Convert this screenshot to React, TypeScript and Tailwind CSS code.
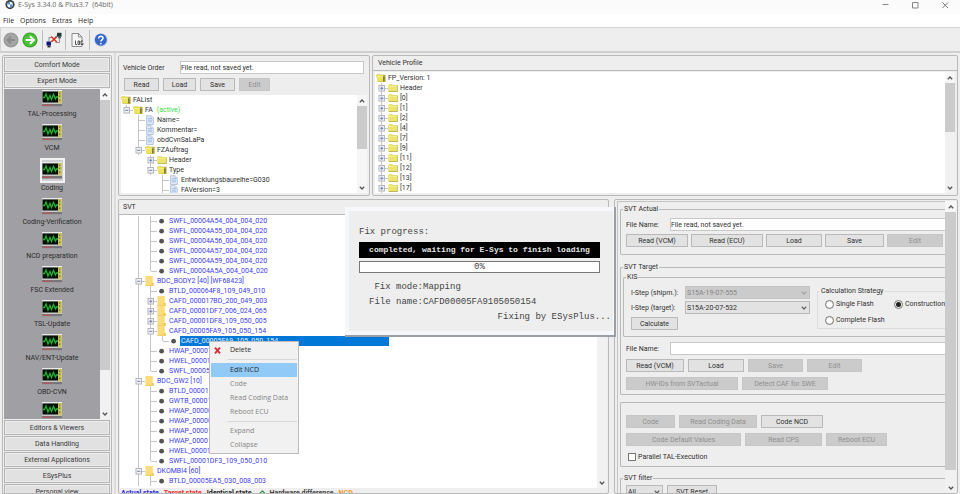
import React from "react";

const ui = "font-['Roboto','Liberation_Sans',sans-serif]";
const menuFont = "font-['Open_Sans','Noto_Sans',sans-serif]";

/* ---------- small controls ---------- */

function Btn({ children, className = "", disabled = false }: { children: React.ReactNode; className?: string; disabled?: boolean }) {
  return (
    <button
      type="button"
      disabled={disabled}
      className={`h-[13px] shrink-0 border text-center leading-[10px] ${
        disabled ? "border-[#c6c6c6] bg-[#cbcbcb] text-[#8f8f8f]" : "border-[#b9b9b9] bg-[#e2e2e2] text-[#303030]"
      } ${className}`}
    >
      {children}
    </button>
  );
}

function Chevron({ up = false, color = "#555" }: { up?: boolean; color?: string }) {
  return (
    <svg viewBox="0 0 6 6" className="h-[6px] w-[6px]" fill="none" stroke={color} strokeWidth="1.3">
      <path d={up ? "M0.8 4.2 3 2 5.2 4.2" : "M0.8 1.8 3 4 5.2 1.8"} />
    </svg>
  );
}

function ScrollBar({ thumb, track, className = "" }: { thumb: string; track: string; className?: string }) {
  return (
    <div className={`flex shrink-0 flex-col ${track} ${className}`}>
      <div className="flex h-[11px] shrink-0 items-center justify-center bg-[#f6f6f6]">
        <Chevron up />
      </div>
      <div className={`shrink-0 bg-[#cbcbcb] ${thumb}`} />
      <div className="flex-1" />
      <div className="flex h-[11px] shrink-0 items-center justify-center">
        <Chevron />
      </div>
    </div>
  );
}

function Group({ title, children, className = "", body = "" }: { title: string; children: React.ReactNode; className?: string; body?: string }) {
  return (
    <fieldset className={`min-w-0 rounded-l-[2px] border border-r-0 border-[#b9b9b9] ${className}`}>
      <legend className="ml-[2px] px-px leading-[10px]">{title}</legend>
      <div className={body}>{children}</div>
    </fieldset>
  );
}

function Combo({ id, label, value, disabled = false, className = "" }: { id: string; label?: string; value: string; disabled?: boolean; className?: string }) {
  return (
    <div className={`relative ${className}`}>
      <select
        id={id}
        aria-label={label}
        disabled={disabled}
        className={`block h-[13px] w-full appearance-none border px-px leading-[10px] opacity-100 ${
          disabled ? "border-[#c4c4c4] bg-[#cbcbcb] text-[#858585]" : "border-[#b9b9b9] bg-[#e2e2e2] text-[#303030]"
        }`}
      >
        <option>{value}</option>
      </select>
      <span className="pointer-events-none absolute top-[4px] right-[3px]">
        <Chevron color={disabled ? "#a5a5a5" : "#666"} />
      </span>
    </div>
  );
}

/* ---------- tree ---------- */

type Icon = "open" | "closed" | "doc" | "dot" | "yellow";
type Row = { g: string; icon: Icon; text: string; extra?: string; selected?: boolean };

/* One 12x10 cell of guide lines: "|" passes through, "t" tee, "l" corner, "+", "-" and "_" are handles. */
function Guide({ kind }: { kind: string }) {
  const handle = kind === "+" || kind === "-" || kind === "_";
  return (
    <svg viewBox="0 0 12 10" className="h-[10px] w-[12px] shrink-0" fill="none" stroke="#c6c6c6" strokeWidth="1">
      {kind !== " " && <path d={kind === "l" || kind === "_" ? "M5.5 0V5" : "M5.5 0V10"} />}
      {kind !== " " && kind !== "|" && <path d="M6 5.5H12" />}
      {handle && (
        <>
          <rect x="3" y="2.5" width="5.5" height="5.5" fill="#f4f4f8" stroke="#b4b4ba" />
          <path d="M4.2 5.3H7.4" stroke="#6f7fb8" />
          {kind === "+" && <path d="M5.8 3.7V6.9" stroke="#6f7fb8" />}
        </>
      )}
    </svg>
  );
}

function TreeIcon({ icon }: { icon: Icon }) {
  return (
    <svg viewBox="0 0 10 10" className="h-[10px] w-[10px] shrink-0">
      {icon === "open" && (
        <>
          <path d="M0.2 2 3.2 0.8 4.2 1.8H9.6V9H2Z" fill="#b5ac4a" />
          <path d="M0.2 2 3.3 0.8 4.3 2.2 7.2 2.3V8.5L1.6 8.7Z" fill="#ece35c" />
          <path d="M1 3.6H6.6" stroke="#f8f4a4" strokeWidth="0.7" />
          <path d="M7.3 3.4H8.4V8.2H7.3Z" fill="#6a6530" />
        </>
      )}
      {icon === "closed" && (
        <>
          <path d="M0.8 2.2 1.6 1.2H4L4.8 2.2H9.7V9H0.8Z" fill="#b0a850" />
          <path d="M0.3 2 1.2 1.1H3.8L4.6 2.2H9V8.3H0.3Z" fill="#ece56c" />
          <path d="M0.8 3.3H8.6" stroke="#f8f4a4" strokeWidth="0.7" />
        </>
      )}
      {icon === "doc" && (
        <>
          <path d="M1.6 0.7H6L8.3 2.8V9.5H1.6Z" fill="#dfeafa" stroke="#9fb1cd" strokeWidth="0.7" />
          <path d="M2.8 3.6H7M2.8 5.2H7M2.8 6.8H7" stroke="#94b0dd" strokeWidth="0.7" />
          <path d="M6 0.8V2.8H8.2" stroke="#9fb1cd" strokeWidth="0.6" fill="#fff" />
        </>
      )}
      {icon === "dot" && <circle cx="4.6" cy="5.2" r="2.4" fill="#555" />}
      {icon === "yellow" && (
        <>
          <path d="M0.4 0.1H7.8V9.9H0.4Z" fill="#fbdc7c" />
          <path d="M6.6 7H8.8V9.9H6.6Z" fill="#f3c955" />
          <path d="M0.4 9.4H7" stroke="#efcb62" strokeWidth="0.8" />
        </>
      )}
    </svg>
  );
}

function Tree({ rows, color = "text-[#303030]" }: { rows: Row[]; color?: string }) {
  return (
    <ul className={color}>
      {rows.map((r, i) => (
        <li key={i} className="flex h-[10px] items-center leading-[10px] whitespace-pre">
          {r.g.split("").map((k, j) => (
            <Guide key={j} kind={k} />
          ))}
          <TreeIcon icon={r.icon} />
          <span className={r.selected ? "ml-px w-[209px] bg-[#0078d7] pl-px text-[#e4efff]" : "pl-[2px]"}>{r.text}</span>
          {r.extra && <span className="pl-[4px] text-[#3be23b]">{r.extra}</span>}
        </li>
      ))}
    </ul>
  );
}

const orderRows: Row[] = [
  { g: "", icon: "open", text: "FAList" },
  { g: "_", icon: "open", text: "FA", extra: "(active)" },
  { g: " t", icon: "doc", text: "Name=" },
  { g: " t", icon: "doc", text: "Kommentar=" },
  { g: " t", icon: "doc", text: "obdCvnSaLaPa" },
  { g: " -", icon: "open", text: "FZAuftrag" },
  { g: "  +", icon: "closed", text: "Header" },
  { g: "  -", icon: "open", text: "Type" },
  { g: "   t", icon: "doc", text: "Entwicklungsbaureihe=G030" },
  { g: "   t", icon: "doc", text: "FAVersion=3" },
];

const profileRows: Row[] = [
  { g: "", icon: "open", text: "FP_Version: 1" },
  ...["Header", "[0]", "[1]", "[2]", "[4]", "[7]", "[9]", "[11]", "[12]", "[13]", "[17]"].map(
    (text): Row => ({ g: "+", icon: "closed", text })
  ),
];

const svtRows: Row[] = [
  { g: " |t", icon: "dot", text: "SWFL_00004A54_004_004_020" },
  { g: " |t", icon: "dot", text: "SWFL_00004A55_004_004_020" },
  { g: " |t", icon: "dot", text: "SWFL_00004A56_004_004_020" },
  { g: " |t", icon: "dot", text: "SWFL_00004A57_004_004_020" },
  { g: " |t", icon: "dot", text: "SWFL_00004A59_004_004_020" },
  { g: " |l", icon: "dot", text: "SWFL_00004A5A_004_004_020" },
  { g: " -", icon: "yellow", text: "BDC_BODY2 [40] [WF68423]" },
  { g: " |t", icon: "dot", text: "BTLD_000064F8_109_049_010" },
  { g: " |+", icon: "yellow", text: "CAFD_000017BD_200_049_003" },
  { g: " |+", icon: "yellow", text: "CAFD_00001DF7_006_024_065" },
  { g: " |+", icon: "yellow", text: "CAFD_00001DF8_109_050_005" },
  { g: " |-", icon: "yellow", text: "CAFD_00005FA9_105_050_154" },
  { g: " ||l", icon: "dot", text: "CAFD_00005FA9_105_050_154", selected: true },
  { g: " |t", icon: "dot", text: "HWAP_00001" },
  { g: " |t", icon: "dot", text: "HWEL_00001" },
  { g: " |l", icon: "dot", text: "SWFL_00005" },
  { g: " -", icon: "yellow", text: "BDC_GW2 [10]" },
  { g: " |t", icon: "dot", text: "BTLD_00001" },
  { g: " |t", icon: "dot", text: "GWTB_00001" },
  { g: " |t", icon: "dot", text: "HWAP_00000" },
  { g: " |t", icon: "dot", text: "HWAP_00000" },
  { g: " |t", icon: "dot", text: "HWAP_00001" },
  { g: " |t", icon: "dot", text: "HWAP_00001" },
  { g: " |t", icon: "dot", text: "HWEL_00001DF0_002_001_000" },
  { g: " |l", icon: "dot", text: "SWFL_00001DF3_109_050_010" },
  { g: " -", icon: "yellow", text: "DKOMBI4 [60]" },
  { g: " |t", icon: "dot", text: "BTLD_00005EA5_030_008_003" },
];

/* ---------- sidebar ---------- */

function ScopeIcon() {
  return (
    <svg viewBox="0 0 20 17" className="h-[17px] w-[20px]">
      <rect width="20" height="17" fill="#c9c9c9" />
      <rect y="0" width="20" height="1" fill="#e9e9e9" />
      <rect x="0.5" y="1.5" width="15.5" height="11" fill="#051005" />
      <path d="M1 7.5H2.5L4 4 6 10 8 5.5 9.5 9.5 11.5 4.5 13.5 9 14.5 7H16" stroke="#1fb431" strokeWidth="1.3" fill="none" />
      <rect x="16" y="1" width="3.5" height="12.5" fill="#c9c158" />
      <path d="M17.7 2.5V4M17.7 5.5V7M17.7 9.5V11" stroke="#7a7530" strokeWidth="1.2" />
      <rect x="0" y="14" width="20" height="2.6" fill="#77777b" />
      <path d="M1 15.2H10" stroke="#d84848" strokeWidth="1" strokeDasharray="2.4 0.6" />
    </svg>
  );
}

const modules = ["TAL-Processing", "VCM", "Coding", "Coding-Verification", "NCD preparation", "FSC Extended", "TSL-Update", "NAV/ENT-Update", "OBD-CVN"];

function SideButton({ children }: { children: React.ReactNode }) {
  return (
    <button type="button" className="h-[15px] w-full shrink-0 border border-[#b5b5b5] bg-[#e1e1e1] leading-[12px] text-[#3a3a3a] outline outline-1 -outline-offset-2 outline-[#ececec]">
      {children}
    </button>
  );
}

function Sidebar() {
  return (
    <nav className="mt-[2px] ml-[2px] flex w-[110px] shrink-0 flex-col gap-px overflow-hidden rounded-t-[2px] border border-[#b9b9b9] bg-[#eee] p-px">
      <SideButton>Comfort Mode</SideButton>
      <SideButton>Expert Mode</SideButton>
      <div className="flex shrink-0 bg-[#a0a0a4]">
        <div className="flex flex-1 flex-col items-center pt-px">
          {modules.map((m) =>
            m === "Coding" ? (
              <button key={m} type="button" className="flex flex-col items-center pb-[5px]">
                <span className="flex h-[25px] w-[25px] items-center justify-center border-2 border-[#f2f2f2] bg-[#d0d0d4]">
                  <ScopeIcon />
                </span>
                <span className="leading-[10px] text-[#2a2a2a]">{m}</span>
              </button>
            ) : (
              <button key={m} type="button" className="flex flex-col items-center pb-[3px]">
                <ScopeIcon />
                <span className="leading-[14px] text-[#2a2a2a]">{m}</span>
              </button>
            )
          )}
          <ScopeIcon />
        </div>
        <ScrollBar className="w-[10px]" track="bg-[#f1f1f1]" thumb="h-[270px]" />
      </div>
      <SideButton>Editors &amp; Viewers</SideButton>
      <SideButton>Data Handling</SideButton>
      <SideButton>External Applications</SideButton>
      <SideButton>ESysPlus</SideButton>
      <SideButton>Personal view</SideButton>
    </nav>
  );
}

/* ---------- header ---------- */

function TitleBar() {
  return (
    <header className={`flex h-[14px] shrink-0 items-start bg-[#fbfbfb] pr-[11px] pl-[5px] ${menuFont}`}>
      <svg viewBox="0 0 10 10" className="h-[10px] w-[10px]">
        <circle cx="5" cy="4.6" r="4.6" fill="#3a3d42" />
        <circle cx="5" cy="4.6" r="2.9" fill="#fff" />
        <path d="M5 4.6V1.7A2.9 2.9 0 0 0 2.1 4.6ZM5 4.6V7.5A2.9 2.9 0 0 0 7.9 4.6Z" fill="#4a93cc" />
      </svg>
      <h1 className="flex-1 pl-[3px] leading-[10px] whitespace-pre text-[#6a6a6a]">E-Sys 3.34.0 &amp; Plus3.7  (64bit)</h1>
      <div className="flex gap-[23px] pt-[2px]">
        <button type="button" aria-label="Minimize">
          <svg viewBox="0 0 7 7" className="h-[7px] w-[7px]" stroke="#888" fill="none"><path d="M0.5 2.5H6.5" /></svg>
        </button>
        <button type="button" aria-label="Maximize">
          <svg viewBox="0 0 7 7" className="h-[7px] w-[7px]" stroke="#888" fill="none"><path d="M0.5 0.5H6V6H0.5Z" /></svg>
        </button>
        <button type="button" aria-label="Close">
          <svg viewBox="0 0 7 7" className="h-[7px] w-[7px]" stroke="#777" fill="none"><path d="M0.5 0.5 6 6M6 0.5 0.5 6" /></svg>
        </button>
      </div>
    </header>
  );
}

function MenuBar() {
  return (
    <nav className={`flex h-[13px] shrink-0 items-center gap-[6px] bg-white pl-[3px] text-[#2a2a2a] ${menuFont}`}>
      {["File", "Options", "Extras", "Help"].map((m) => (
        <button key={m} type="button" className="leading-[12px]">{m}</button>
      ))}
    </nav>
  );
}

function Toolbar() {
  const sep = <div className="h-[20px] w-px bg-[#bdbdbd]" />;
  return (
    <div className="flex h-[24px] shrink-0 items-center border-t border-l border-[#d4d4d4] bg-[#eee] pl-[2px]">
      <button type="button" aria-label="Back">
        <svg viewBox="0 0 16 16" className="h-[16px] w-[16px]">
          <circle cx="8" cy="8" r="7.5" fill="#9b9b9b" />
          <circle cx="8" cy="8" r="6" fill="#a6a6a6" />
          <path d="M12 8H5M8 4.5 4.5 8 8 11.5" stroke="#8b8b8b" strokeWidth="1.8" fill="none" />
        </svg>
      </button>
      <button type="button" aria-label="Forward" className="mr-[4px] ml-[3px]">
        <svg viewBox="0 0 16 16" className="h-[16px] w-[16px]">
          <circle cx="8" cy="8" r="7.6" fill="#3aa22c" />
          <circle cx="8" cy="8" r="6.4" fill="#4cc038" />
          <path d="M3.6 8H11.6M8 4.2 11.8 8 8 11.8" stroke="#fff" strokeWidth="2.1" fill="none" />
        </svg>
      </button>
      {sep}
      <button type="button" aria-label="Connect" className="mx-[3px]">
        <svg viewBox="0 0 16 16" className="h-[16px] w-[16px]">
          <path d="M11 0.8H15.5V4.8H11Z" fill="#1c3b3b" />
          <path d="M12 4.8H15V6.4H12Z" fill="#3f6e6e" />
          <path d="M0.5 9.5H5V13.5H0.5Z" fill="#12128a" />
          <path d="M1.5 13.5H4.5V15.4H1.5Z" fill="#26262e" />
          <path d="M3 9.5V5.5H7M13.5 6V10.5H9.5" stroke="#777" fill="none" strokeWidth="0.8" />
          <path d="M4 11 11 3.4" stroke="#444" strokeWidth="0.9" />
          <path d="M5.2 4.6 10.8 10M10.8 4.8 5.4 10" stroke="#e0311f" strokeWidth="1.4" />
        </svg>
      </button>
      {sep}
      <button type="button" aria-label="Log" className="mr-[5px] ml-[5px]">
        <svg viewBox="0 0 13 16" className="h-[16px] w-[13px]">
          <path d="M1 1.5H7.5L11 5V14.5H1Z" fill="#f6f6f6" stroke="#8d8d8d" />
          <path d="M7.5 1.5V5H11" fill="none" stroke="#8d8d8d" />
          <path d="M4.5 8.5V12.5H6M7 9H8.5V12.5H7ZM12 9H10V12.5H12V11" stroke="#444" strokeWidth="0.9" fill="none" />
        </svg>
      </button>
      {sep}
      <button type="button" aria-label="Help" className="ml-[4px]">
        <svg viewBox="0 0 14 14" className="h-[14px] w-[14px]">
          <circle cx="7" cy="7" r="6.8" fill="#c9d2e6" />
          <circle cx="6.8" cy="6.8" r="6" fill="#3568c6" />
          <path d="M4.6 5.4C4.6 2.6 9.2 2.7 9.1 5.3 9 6.9 6.9 6.8 6.9 8.5" stroke="#fff" strokeWidth="1.5" fill="none" />
          <circle cx="6.9" cy="10.6" r="0.9" fill="#fff" />
        </svg>
      </button>
    </div>
  );
}

/* ---------- panels ---------- */

const panel = "rounded-[2px] border border-[#b9b9b9] bg-[#eee]";
const field = "h-[13px] border border-[#c8c8c8] bg-white leading-[10px] text-[#303030]";

function VehicleOrder() {
  return (
    <section className={`flex w-[252px] shrink-0 flex-col pt-[5px] pb-[2px] ${panel}`}>
      <div className="flex items-center pr-[5px] pl-[4px]">
        <label htmlFor="order" className="w-[57px] shrink-0 leading-[10px]">Vehicle Order</label>
        <input id="order" readOnly defaultValue="File read, not saved yet." className={`min-w-0 flex-1 ${field}`} />
      </div>
      <div className="mt-[4px] flex gap-[4px] pl-[5px]">
        <Btn className="w-[35px]">Read</Btn>
        <Btn className="w-[33px]">Load</Btn>
        <Btn className="w-[35px]">Save</Btn>
        <Btn className="w-[31px]" disabled>Edit</Btn>
      </div>
      <div className="mt-[4px] mr-[2px] ml-[2px] flex h-[98px] overflow-hidden bg-white">
        <div className="flex-1"><Tree rows={orderRows} /></div>
        <ScrollBar className="w-[10px]" track="bg-[#f6f6f6]" thumb="h-[43px]" />
      </div>
    </section>
  );
}

function VehicleProfile() {
  return (
    <section className={`flex min-w-0 flex-1 flex-col pb-[2px] ${panel}`}>
      <h2 className="h-[15px] border-b border-[#b9b9b9] pl-[5px] leading-[14px]">Vehicle Profile</h2>
      <div className="mx-[2px] mt-px flex h-[121px] overflow-hidden bg-white">
        <div className="flex-1 pt-px pl-px"><Tree rows={profileRows} /></div>
        <ScrollBar className="w-[10px]" track="bg-[#f1f1f1]" thumb="h-[49px]" />
      </div>
    </section>
  );
}

function SvtPanel() {
  return (
    <section className={`min-w-0 flex-1 overflow-hidden ${panel}`}>
      <h2 className="h-[15px] border-b border-[#b9b9b9] pl-[4px] leading-[14px]">SVT</h2>
      <div className="mr-px ml-px flex bg-white">
        <div className="flex-1 pt-px pb-[2px] pl-px"><Tree rows={svtRows} color="text-[#3c3cf0]" /></div>
        <ScrollBar className="w-[10px]" track="bg-[#f1f1f1]" thumb="h-[100px]" />
      </div>
      <div className="flex gap-[5px] pl-[2px] leading-[10px] font-bold">
        <span className="text-[#2a2ae0]">Actual state</span>
        <span className="text-[#ee3030]">Target state</span>
        <span className="text-[#222]">Identical state</span>
        <span className="flex items-center gap-[3px] pl-[3px] text-[#444]">
          <svg viewBox="0 0 7 7" className="h-[7px] w-[7px]" fill="none" stroke="#2a8a3a" strokeWidth="1.1">
            <path d="M1 5V3L3.5 1 5.5 3V6.5M1 6.5H3" />
          </svg>
          Hardware difference
        </span>
        <span className="text-[#ef9a2d]">NCD</span>
      </div>
    </section>
  );
}

function Radio({ label, checked = false }: { label: string; checked?: boolean }) {
  return (
    <label className="flex h-[16px] items-center gap-[2px] leading-[10px] whitespace-nowrap">
      <input
        type="radio"
        name="strategy"
        defaultChecked={checked}
        className="h-[9px] w-[9px] appearance-none rounded-full border border-[#777] bg-white bg-clip-content p-px checked:bg-[#222]"
      />
      {label}
    </label>
  );
}

function CodingPanel() {
  return (
    <section className={`flex w-[344px] shrink-0 overflow-hidden pt-px pr-px pl-[2px] ${panel}`}>
      <div className="flex min-w-0 flex-1 flex-col overflow-hidden border-t border-l border-[#c4c4c4] pt-[2px] pl-[2px]">
        <Group title="SVT Actual" className="shrink-0" body="pb-[7px] pl-[5px]">
          <div className="flex items-center pt-[4px]">
            <label htmlFor="actual-file" className="w-[44px] shrink-0">File Name:</label>
            <input id="actual-file" readOnly defaultValue="File read, not saved yet." className={`min-w-0 flex-1 border-r-0 ${field}`} />
          </div>
          <div className="mt-[3px] flex gap-[3px] overflow-hidden">
            <Btn className="w-[62px]">Read (VCM)</Btn>
            <Btn className="w-[72px]">Read (ECU)</Btn>
            <Btn className="w-[56px]">Load</Btn>
            <Btn className="w-[59px]">Save</Btn>
            <Btn className="w-[56px]" disabled>Edit</Btn>
          </div>
        </Group>

        <Group title="SVT Target" className="mt-[7px] shrink-0" body="pb-[4px] pl-[2px]">
          <Group title="KIS" body="flex gap-[7px] pb-[6px] pl-[7px]">
            <div className="pt-[4px]">
              <div className="flex items-center">
                <label htmlFor="istep-ship" className="w-[54px] shrink-0">I-Step (shipm.):</label>
                <Combo id="istep-ship" value="S15A-19-07-555" disabled className="w-[125px]" />
              </div>
              <div className="mt-[2px] flex items-center">
                <label htmlFor="istep-target" className="w-[54px] shrink-0">I-Step (target):</label>
                <Combo id="istep-target" value="S15A-20-07-532" className="w-[125px]" />
              </div>
              <Btn className="mt-[3px] block w-[47px]">Calculate</Btn>
            </div>
            <fieldset className="mt-[4px] h-[43px] min-w-0 flex-1 border border-r-0 border-[#dcdcdc]">
              <legend className="ml-[2px] px-px leading-[10px]">Calculation Strategy</legend>
              <div className="grid grid-cols-[69px_1fr] pl-[7px]">
                <Radio label="Single Flash" />
                <Radio label="Construction" checked />
                <Radio label="Complete Flash" />
              </div>
            </fieldset>
          </Group>
          <div className="mt-[5px] flex items-center pl-[3px]">
            <label htmlFor="target-file" className="w-[44px] shrink-0">File Name:</label>
            <input id="target-file" className={`min-w-0 flex-1 border-r-0 ${field}`} />
          </div>
          <div className="mt-[4px] flex gap-[4px] pl-[3px]">
            <Btn className="w-[58px]">Read (VCM)</Btn>
            <Btn className="w-[56px]">Load</Btn>
            <Btn className="w-[55px]" disabled>Save</Btn>
            <Btn className="w-[55px]" disabled>Edit</Btn>
          </div>
          <div className="mt-[5px] flex gap-[4px] pl-[3px]">
            <Btn className="w-[112px]" disabled>HW-IDs from SVTactual</Btn>
            <Btn className="w-[86px]" disabled>Detect CAF for SWE</Btn>
          </div>
        </Group>

        <div className="mt-[7px] shrink-0 rounded-l-[2px] border border-r-0 border-[#b9b9b9] pt-[12px] pb-[3px] pl-[5px]">
          <div className="flex gap-[4px]">
            <Btn className="w-[49px]" disabled>Code</Btn>
            <Btn className="w-[78px]" disabled>Read Coding Data</Btn>
            <Btn className="w-[62px]">Code NCD</Btn>
          </div>
          <div className="mt-[5px] flex gap-[4px]">
            <Btn className="w-[115px]" disabled>Code Default Values</Btn>
            <Btn className="w-[77px]" disabled>Read CPS</Btn>
            <Btn className="w-[61px]" disabled>Reboot ECU</Btn>
          </div>
          <label className="mt-[5px] flex items-center gap-[2px] pl-[2px] leading-[12px]">
            <input type="checkbox" className="h-[8px] w-[8px] appearance-none border border-[#777] bg-white" />
            Parallel TAL-Execution
          </label>
        </div>

        <Group title="SVT filter" className="mt-[6px] shrink-0" body="flex gap-[4px] pt-[2px] pb-[4px] pl-[5px]">
          <Combo id="svt-filter" label="SVT filter" value="All" className="w-[37px]" />
          <Btn className="w-[50px]">SVT Reset</Btn>
        </Group>
      </div>
      <ScrollBar className="w-[11px]" track="bg-[#f1f1f1]" thumb="h-[258px]" />
    </section>
  );
}

/* ---------- floating windows ---------- */

function ContextMenu() {
  const item = "flex h-[14px] w-full items-center pl-[19px] text-left leading-[12px]";
  const off = "text-[#858585]";
  return (
    <div className={`absolute top-[341px] left-[209px] w-[90px] border border-[#bdbdbd] bg-[#f1f1f1] p-px text-[#2a2a2a] ${menuFont}`}>
      <button type="button" className="flex h-[14px] w-full items-center gap-[9px] pl-[3px] leading-[12px]">
        <svg viewBox="0 0 7 7" className="h-[7px] w-[7px]" stroke="#d3303a" strokeWidth="1.9"><path d="M1 0.6 6 6.4M6 0.6 1 6.4" /></svg>
        Delete
      </button>
      <hr className="mt-[2px] mb-[3px] ml-[17px] border-[#d7d7d7]" />
      <button type="button" className={`bg-[#91c9f7] ${item}`}>Edit NCD</button>
      <button type="button" disabled className={`${item} ${off}`}>Code</button>
      <button type="button" disabled className={`${item} ${off}`}>Read Coding Data</button>
      <button type="button" disabled className={`${item} ${off}`}>Reboot ECU</button>
      <hr className="mt-[2px] mb-[2px] ml-[17px] border-[#d7d7d7]" />
      <button type="button" disabled className={`${item} ${off}`}>Expand</button>
      <button type="button" disabled className={`${item} ${off}`}>Collapse</button>
    </div>
  );
}

function FixDialog() {
  return (
    <div
      role="dialog"
      aria-label="Fix progress"
      className="absolute top-[207px] left-[345px] h-[130px] w-[271px] border-r-2 border-b-2 border-[#9a9ea5] bg-[#f5f7fc] p-[4px] pr-px font-['Liberation_Mono','DejaVu_Sans_Mono',monospace] text-[9px] leading-[15px] text-[#444]"
    >
      <div className="h-full bg-[#eee] pt-[14px] pl-[10px]">
        <p>Fix progress:</p>
        <p className="mt-[2px] h-[16px] w-[241px] bg-black text-center text-[8px] leading-[16px] font-bold whitespace-nowrap text-[#e4e4e4]">
          completed, waiting for E-Sys to finish loading
        </p>
        <div role="progressbar" aria-valuenow={0} className="mt-[3px] h-[12px] w-[241px] border border-[#777] bg-white text-center leading-[10px]">
          0%
        </div>
        <dl className="mt-[7px] grid grid-cols-[64px_1fr]">
          <dt className="text-right">Fix mode:</dt>
          <dd>Mapping</dd>
          <dt className="text-right">File name:</dt>
          <dd>CAFD00005FA9105050154</dd>
        </dl>
        <p className="pr-[2px] text-right">Fixing by ESysPlus...</p>
      </div>
    </div>
  );
}

export default function App() {
  return (
    <div className={`relative flex h-screen flex-col overflow-hidden bg-[#eee] text-[7px] leading-[10px] text-[#303030] ${ui}`}>
      <TitleBar />
      <MenuBar />
      <Toolbar />
      <div className="h-[2px] shrink-0 bg-[#cfcfd1]" />
      <div className="flex min-h-0 flex-1">
        <Sidebar />
        <div className="mx-[2px] w-[2px] shrink-0 bg-[#dcdcde]" />
        <main className="flex min-w-0 flex-1 flex-col pt-[2px] pr-[2px]">
          <div className="flex shrink-0 gap-[2px]">
            <VehicleOrder />
            <VehicleProfile />
          </div>
          <div className="mt-[3px] flex min-h-0 flex-1 gap-[5px]">
            <SvtPanel />
            <CodingPanel />
          </div>
        </main>
      </div>
      <ContextMenu />
      <FixDialog />
    </div>
  );
}
